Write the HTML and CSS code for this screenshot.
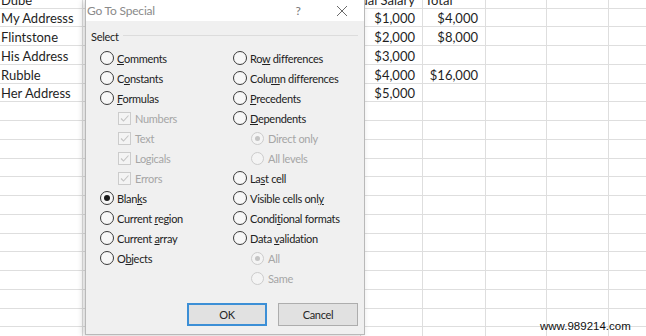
FILE: index.html
```html
<!DOCTYPE html>
<html>
<head>
<meta charset="utf-8">
<link rel="stylesheet" href="styles.css">
</head>
<body>
<div class="sheet">
  <div class="row top"><div class="c">Dube</div><div class="c"></div><div class="c r">Annual Salary</div><div class="c">Total</div><div class="c"></div><div class="c"></div><div class="c"></div></div>
  <div class="row"><div class="c">My Addresss</div><div class="c"></div><div class="c r">$1,000</div><div class="c r">$4,000</div><div class="c"></div><div class="c"></div><div class="c"></div></div>
  <div class="row"><div class="c">Flintstone</div><div class="c"></div><div class="c r">$2,000</div><div class="c r">$8,000</div><div class="c"></div><div class="c"></div><div class="c"></div></div>
  <div class="row"><div class="c">His Address</div><div class="c"></div><div class="c r">$3,000</div><div class="c r"></div><div class="c"></div><div class="c"></div><div class="c"></div></div>
  <div class="row"><div class="c">Rubble</div><div class="c"></div><div class="c r">$4,000</div><div class="c r">$16,000</div><div class="c"></div><div class="c"></div><div class="c"></div></div>
  <div class="row"><div class="c">Her Address</div><div class="c"></div><div class="c r">$5,000</div><div class="c r"></div><div class="c"></div><div class="c"></div><div class="c"></div></div>
  <div class="row"><div class="c"></div><div class="c"></div><div class="c"></div><div class="c"></div><div class="c"></div><div class="c"></div><div class="c"></div></div>
  <div class="row"><div class="c"></div><div class="c"></div><div class="c"></div><div class="c"></div><div class="c"></div><div class="c"></div><div class="c"></div></div>
  <div class="row"><div class="c"></div><div class="c"></div><div class="c"></div><div class="c"></div><div class="c"></div><div class="c"></div><div class="c"></div></div>
  <div class="row"><div class="c"></div><div class="c"></div><div class="c"></div><div class="c"></div><div class="c"></div><div class="c"></div><div class="c"></div></div>
  <div class="row"><div class="c"></div><div class="c"></div><div class="c"></div><div class="c"></div><div class="c"></div><div class="c"></div><div class="c"></div></div>
  <div class="row"><div class="c"></div><div class="c"></div><div class="c"></div><div class="c"></div><div class="c"></div><div class="c"></div><div class="c"></div></div>
  <div class="row"><div class="c"></div><div class="c"></div><div class="c"></div><div class="c"></div><div class="c"></div><div class="c"></div><div class="c"></div></div>
  <div class="row"><div class="c"></div><div class="c"></div><div class="c"></div><div class="c"></div><div class="c"></div><div class="c"></div><div class="c"></div></div>
  <div class="row"><div class="c"></div><div class="c"></div><div class="c"></div><div class="c"></div><div class="c"></div><div class="c"></div><div class="c"></div></div>
  <div class="row"><div class="c"></div><div class="c"></div><div class="c"></div><div class="c"></div><div class="c"></div><div class="c"></div><div class="c"></div></div>
  <div class="row"><div class="c"></div><div class="c"></div><div class="c"></div><div class="c"></div><div class="c"></div><div class="c"></div><div class="c"></div></div>
  <div class="row"><div class="c"></div><div class="c"></div><div class="c"></div><div class="c"></div><div class="c"></div><div class="c"></div><div class="c"></div></div>
  <div class="row"><div class="c"></div><div class="c"></div><div class="c"></div><div class="c"></div><div class="c"></div><div class="c"></div><div class="c"></div></div>
</div>

<div class="dialog">
  <div class="titlebar">
    <span class="title">Go To Special</span>
    <span class="help">?</span>
    <span class="close"><svg width="12" height="12" viewBox="0 0 12 12"><path d="M1 1 L11 11 M11 1 L1 11" stroke="#6a6a6a" stroke-width="1" fill="none"/></svg></span>
  </div>
  <div class="body">
    <div class="group"><span class="legend">Select</span><span class="rule"></span></div>
    <div class="cols">
      <div class="col left">
        <div class="opt"><span class="radio"></span><span><u>C</u>omments</span></div>
        <div class="opt"><span class="radio"></span><span>C<u>o</u>nstants</span></div>
        <div class="opt"><span class="radio"></span><span><u>F</u>ormulas</span></div>
        <div class="opt sub dis"><span class="check"><svg width="11" height="11" viewBox="0 0 11 11"><path d="M2 5.5 L4.5 8 L9.5 2.5" stroke="#c4c4c4" stroke-width="1.1" fill="none"/></svg></span><span>Numbers</span></div>
        <div class="opt sub dis"><span class="check"><svg width="11" height="11" viewBox="0 0 11 11"><path d="M2 5.5 L4.5 8 L9.5 2.5" stroke="#c4c4c4" stroke-width="1.1" fill="none"/></svg></span><span>Text</span></div>
        <div class="opt sub dis"><span class="check"><svg width="11" height="11" viewBox="0 0 11 11"><path d="M2 5.5 L4.5 8 L9.5 2.5" stroke="#c4c4c4" stroke-width="1.1" fill="none"/></svg></span><span>Logicals</span></div>
        <div class="opt sub dis"><span class="check"><svg width="11" height="11" viewBox="0 0 11 11"><path d="M2 5.5 L4.5 8 L9.5 2.5" stroke="#c4c4c4" stroke-width="1.1" fill="none"/></svg></span><span>Errors</span></div>
        <div class="opt"><span class="radio on"></span><span>Blan<u>k</u>s</span></div>
        <div class="opt"><span class="radio"></span><span>Current <u>r</u>egion</span></div>
        <div class="opt"><span class="radio"></span><span>Current <u>a</u>rray</span></div>
        <div class="opt"><span class="radio"></span><span>O<u>b</u>jects</span></div>
      </div>
      <div class="col right">
        <div class="opt"><span class="radio"></span><span>Ro<u>w</u> differences</span></div>
        <div class="opt"><span class="radio"></span><span>Colu<u>m</u>n differences</span></div>
        <div class="opt"><span class="radio"></span><span><u>P</u>recedents</span></div>
        <div class="opt"><span class="radio"></span><span><u>D</u>ependents</span></div>
        <div class="opt sub dis"><span class="radio on"></span><span>Direct only</span></div>
        <div class="opt sub dis"><span class="radio"></span><span>All levels</span></div>
        <div class="opt"><span class="radio"></span><span>La<u>s</u>t cell</span></div>
        <div class="opt"><span class="radio"></span><span>Visible cells onl<u>y</u></span></div>
        <div class="opt"><span class="radio"></span><span>Condi<u>t</u>ional formats</span></div>
        <div class="opt"><span class="radio"></span><span>Data <u>v</u>alidation</span></div>
        <div class="opt sub dis"><span class="radio on"></span><span>All</span></div>
        <div class="opt sub dis"><span class="radio"></span><span>Same</span></div>
      </div>
    </div>
    <div class="buttons">
      <button class="btn default">OK</button>
      <button class="btn">Cancel</button>
    </div>
  </div>
</div>

<div class="watermark">www.989214.com</div>
</body>
</html>
```

FILE: styles.css
```css
html, body {
  margin: 0;
  padding: 0;
  background: #ffffff;
  overflow: hidden;
}
body {
  width: 646px;
  height: 336px;
  position: relative;
}
.sheet {
  margin-top: -10.25px;
  display: flex;
  flex-direction: column;
  font-family: Lato, "Open Sans", sans-serif;
  font-size: 13px;
  color: #1f1f1f;
}
.row {
  display: grid;
  grid-template-columns: 83px 278px 62px 63px 61px 62px 62px;
  height: 18.75px;
}
.c {
  border-right: 1px solid #dedede;
  border-bottom: 1px solid #dedede;
  box-sizing: border-box;
  display: flex;
  align-items: flex-end;
  padding: 0 1px 0 1px;
  line-height: 16px;
  white-space: nowrap;
  overflow: visible;
}
.c.r {
  justify-content: flex-end;
  padding-right: 7px;
}
.row.top .c:nth-child(4) {
  padding-left: 2px;
}

.dialog {
  position: absolute;
  left: 85px;
  top: 0;
  width: 280px;
  height: 335px;
  box-sizing: border-box;
  border: 1px solid #b9b9b9;
  border-top: none;
  background: #f0f0f0;
  box-shadow: -2px 1px 6px rgba(0,0,0,0.18);
  font-family: Lato, "Open Sans", sans-serif;
  font-size: 11px;
  letter-spacing: -0.3px;
  color: #222222;
  display: flex;
  flex-direction: column;
}
.titlebar {
  height: 21px;
  background: #ffffff;
  display: flex;
  align-items: center;
  padding-left: 1px;
}
.title {
  font-size: 12px;
  letter-spacing: -0.2px;
  color: #8a8a8a;
  flex: 1;
}
.help {
  font-size: 12px;
  color: #777;
  width: 14px;
  text-align: center;
}
.close {
  width: 44px;
  display: flex;
  justify-content: center;
  margin-left: 15px;
}
.close svg { display: block; }
.body {
  flex: 1;
  display: flex;
  flex-direction: column;
  padding: 8px 6px 8px 14px;
}
.group {
  display: flex;
  align-items: center;
  height: 14px;
  margin-left: -9px;
}
.legend {
  padding-right: 4px;
}
.rule {
  flex: 1;
  border-top: 1px solid #dcdcdc;
  margin-top: -2px;
}
.cols {
  display: flex;
  margin-top: 5px;
}
.col.left { width: 133px; }
.col.right { flex: 1; }
.opt {
  height: 20px;
  display: flex;
  align-items: center;
  gap: 3px;
  white-space: nowrap;
}
.opt.sub {
  padding-left: 18px;
  gap: 4px;
}
.opt.dis { color: #a6a6a6; }
u { text-decoration-thickness: 1px; text-underline-offset: 1px; }
.radio {
  width: 14px;
  height: 14px;
  box-sizing: border-box;
  border: 1px solid #3a3a3a;
  border-radius: 50%;
  background: #f7f7f7;
  display: flex;
  align-items: center;
  justify-content: center;
  flex: none;
}
.radio.on::after {
  content: "";
  width: 6px;
  height: 6px;
  border-radius: 50%;
  background: #1a1a1a;
}
.dis .radio {
  width: 13px;
  height: 13px;
  border-color: #cccccc;
  background: #f4f4f4;
}
.dis .radio.on::after { width: 5px; height: 5px; background: #c4c4c4; }
.check {
  width: 13px;
  height: 13px;
  box-sizing: border-box;
  border: 1px solid #cccccc;
  background: #f4f4f4;
  display: flex;
  align-items: center;
  justify-content: center;
  flex: none;
}
.check svg { display: block; }
.buttons {
  margin-top: auto;
  display: flex;
  justify-content: flex-end;
  gap: 11px;
}
.btn {
  width: 80px;
  height: 23px;
  box-sizing: border-box;
  border: 1px solid #adadad;
  background: #e1e1e1;
  font-family: Lato, "Open Sans", sans-serif;
  font-size: 11px;
  letter-spacing: -0.3px;
  color: #262626;
  padding: 0;
}
.btn.default {
  border: 2px solid #3c8fd6;
}
.watermark {
  position: absolute;
  left: 540px;
  top: 320px;
  font-family: "Liberation Sans", Arial, sans-serif;
  font-size: 11.5px;
  color: #111;
}
```
